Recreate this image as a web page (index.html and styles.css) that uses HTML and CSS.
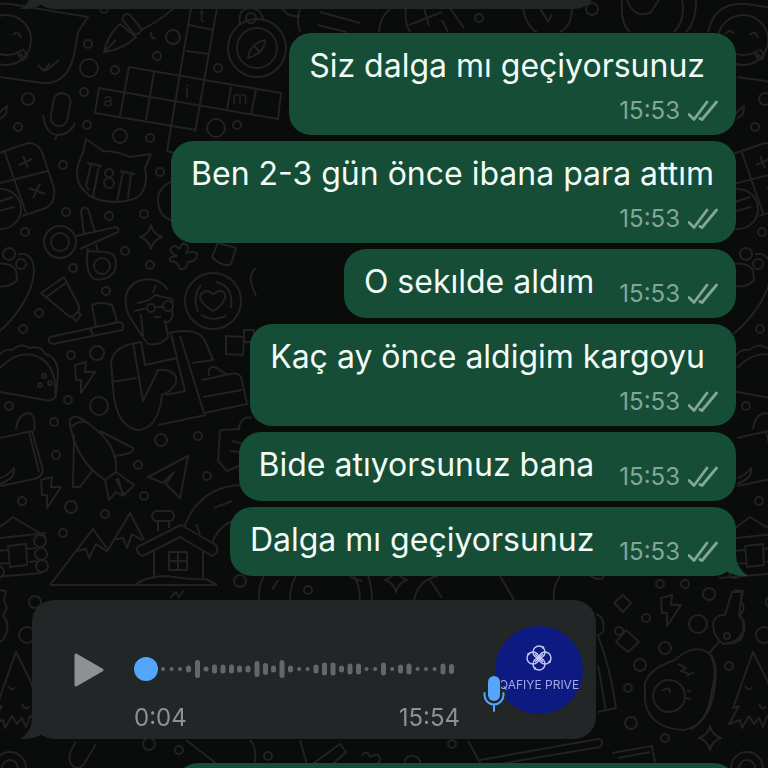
FILE: index.html
```html
<!DOCTYPE html>
<html lang="tr">
<head>
<meta charset="utf-8">
<meta name="viewport" content="width=device-width, initial-scale=1">
<title>Sohbet</title>
<link rel="stylesheet" href="styles.css">
</head>
<body>
<svg class="wallpaper" viewBox="0 0 768 768" preserveAspectRatio="xMinYMin slice" aria-hidden="true">
  <defs>
    <path id="bolt" d="M-7-13 4-16 3-6 13-6-1 15-1 2-6 2Z"/>
    <path id="spark" d="M0-12Q2-3 11 0 2 3 0 12-2 3-11 0-2-3 0-12Z"/>
    <g id="edge">
      <!-- smiling face in a speech bubble -->
      <path d="M-29 32C-24 10-10 2 10 4L88 17 78 32 74 55Q67 85 42 83L0 77M38 65l6 6 6-8M43 69l4 1 12-10"/>
      <circle cx="6" cy="40" r="25"/>
      <path d="M-12 34q5-6 9 0M13 35q5-6 8 3M-10 50Q8 60 22 50M17 52l4 7q5 2 6-4l-4-6M20 53l3 4"/>
      <!-- pencil tip, calculator -->
      <path d="M-6 120 2 110 7 106 6 114 0 119M-10 156 28 143Q38 143 42 152L54 188Q56 202 46 208L22 216M4 150 26 213M-8 185 48 171M19 165l13-6M23 156l5 12M29 188l16 6M40 184l-7 14"/>
      <circle cx="1" cy="209" r="20"/><path d="M-8 204 13 197M-8 213 14 207"/>
      <!-- guitar head -->
      <circle cx="9" cy="254" r="6"/><circle cx="21" cy="264" r="5"/>
      <path d="M18 254Q34 252 34 272C33 295 12 322-4 334M-4 264Q10 262 16 270L17 280Q10 288-3 286"/>
      <!-- taco -->
      <path d="M-4 360Q2 348 12 350 22 342 29 348 42 345 45 354 58 357 58 374L56 395Q54 402 45 400L-5 391M0 368Q24 344 46 362 57 374 55 394"/>
      <circle cx="44" cy="376" r="2"/><circle cx="40" cy="385" r="2"/><circle cx="50" cy="383" r="2"/>
      <!-- book -->
      <path d="M0 438 32 431 43 470Q42 477 34 479L0 486M29 432l10 40M16 429q2-16 14-16 6 4 4 18M0 478q8-2 14-10 2 10-14 16"/>
      <!-- log cabin -->
      <path d="M-18 540 13 517 46 537M-18 540 46 533M-18 578 42 573M8 546l18-2 1 21-17 2ZM-4 551l12-1M27 549l9-1M-4 564l13-1M29 562l8-1"/>
      <circle cx="40" cy="541" r="6"/><circle cx="41" cy="554" r="6"/><circle cx="42" cy="566" r="6"/><circle cx="-2" cy="572" r="6"/>
      <!-- shrub and pine tree -->
      <path d="M-3 590 6 591 4 600 7 608 3 616Q12 625 3 640L-4 644M16 652-4 708 2 706-8 724 3 720 5 728 12 716 17 724 22 718 26 727 30 716 38 720 33 704 38 703 30 680ZM8 686q4 6 7 1M22 704q4 8 7 2"/>
      <circle cx="10" cy="768" r="16"/><circle cx="10" cy="768" r="8"/>
      <circle cx="28" cy="99" r="6"/><circle cx="18" cy="127" r="4"/><circle cx="25" cy="232" r="4"/><circle cx="23" cy="329" r="4"/><circle cx="9" cy="406" r="4"/><circle cx="22" cy="501" r="4"/><circle cx="35" cy="602" r="6"/><circle cx="27" cy="635" r="8"/>
    </g>
  </defs>
  <use href="#edge"/>
  <use href="#edge" x="737"/>
  <!-- microphone -->
  <rect x="52" y="93" width="17" height="33" rx="8" transform="rotate(10 60 110)"/>
  <path d="M43 115q2 18 14 20 13 0 18-12M57 135l-2 5"/>
  <!-- fountain pen -->
  <path d="M104 52Q107 36 120 24L136 37Q122 50 104 52ZM104 52l12-12"/>
  <rect x="120" y="19" width="23" height="9" rx="4" transform="rotate(50 131 24)"/>
  <path d="M141 30Q158 22 174 8M151 32q0 8 5 6"/>
  <!-- crossword -->
  <path d="M191 8 167 151 174 153M217 8 195 132M129 67 281 93 278 119 99 88 95 113 196 130M129 67 120 116M154 72 146 120M231 87 227 110M256 90 251 114M189 25 214 30M186 51 209 54"/>
  <g class="letters"><text x="103" y="106">a</text><text x="185" y="98">i</text><text x="232" y="104">m</text><text x="199" y="22">t</text></g>
  <!-- compass -->
  <circle cx="257" cy="48" r="29"/><circle cx="257" cy="48" r="20"/><circle cx="251" cy="18" r="5"/>
  <path d="M240 25Q237 8 251 8 263 10 263 20M248 58Q250 43 265 40 265 53 248 58ZM254 46l6 6"/>
  <!-- objects between the top cards -->
  <path d="M282 8q6 10 18 8M300 8q-4 12 0 24M320 12l40 11M318 25l28 7M391 8q-12 10-12 24M406 8q-2 14 4 24M409 25l33-13M424 8l5 18M442 20l6 12M450 8l14 20M523 8q4 20 14 24M572 8q0 18-12 24M540 8l8 14 4-8M622 0q-2 24 8 32M627 0q8 20 24 12l8-12M682 0q4 20-8 32M696 0q0 22-10 32"/>
  <!-- cat -->
  <path d="M86 139 103 151Q117 151 130 157L151 154 145 168Q149 190 136 198 112 207 90 196 72 183 79 162L83 152ZM87 163l15 3M91 164l-5 22 3 4M99 166l-6 30M120 171l15 3M123 172l-6 30M131 174l-3 24"/>
  <circle cx="109" cy="173" r="4"/><circle cx="109" cy="183" r="5"/>
  <path d="M172 181q-16 8-14 22 2 14 14 18"/>
  <!-- scissors -->
  <circle cx="60" cy="242" r="16"/><circle cx="60" cy="242" r="9"/><circle cx="102" cy="266" r="8"/>
  <path d="M76 236 116 227Q120 229 118 232L80 249M84 234 81 211Q83 205 88 209L95 232M88 248Q84 272 94 279 108 282 115 270 119 253 105 252L88 251M96 244l2 8"/>
  <use href="#spark" x="151" y="237"/>
  <path d="M170 249q5-6 9 0l4-6q8 2 3 10 5-2 11 0 1 8-9 9-1 8-8 7-2-8-10-8-1-5 7-5-6-2-7-7ZM218 243l18 5-5 16q-8 4-19-7ZM256 268q-8 6-4 18l4 10"/>
  <!-- bottle and hat -->
  <path d="M41 293 64 277 79 306Q80 314 70 317ZM45 298l22-16M72 317l4 4 5-6-4-4M92 305q8-4 20 0l5 16M92 305l4 22M50 337l69-15q7 2 3 8l-69 14q-7-2-3-7ZM90 328l3 7"/>
  <!-- reader with spectacles -->
  <path d="M142 336 128 314Q120 290 138 281 158 275 168 290M141 314 143 336M165 320 168 337Q160 346 148 344L142 336M134 311l14-3M137 303q14-2 18-8l17 4M153 293l3-8M172 299l2 3M172 309q3 12-8 14M154 317l7 0"/>
  <circle cx="151" cy="308" r="4"/><circle cx="168" cy="306" r="5"/>
  <path d="M155 307h8M142 342Q114 345 111 362L114 398Q120 430 140 430 159 426 162 395 178 388 176 377 171 368 158 370L143 401 133 343M141 341l4 24 32-7-6-24M111 382l26-4M168 333Q200 326 206 343L213 360 192 363M180 336l24 77 43-9-6-27Q238 372 230 374L202 380M177 359l8 32-19 4M203 397l39-7M158 425l48-10M209 376q-2-12 8-8 8 6 12 7"/>
  <!-- heart badge -->
  <circle cx="213" cy="301" r="28"/>
  <path d="M198 312q-6-16 3-27M216 282q18 4 15 26M201 315q12 7 25 1M213 311q-16-10-12-17 6-6 12 0 8-6 12 0 2 8-12 17ZM226 336l18 1-1 18-17-1ZM244 330h10v12h-10Z"/>
  <use href="#bolt" x="82" y="378"/>
  <use href="#bolt" x="48" y="493"/>
  <!-- rocket -->
  <path d="M70 420Q74 412 89 424 119 445 116 472L105 480Q77 462 70 425ZM74 434l-1 53 7 0 12-16M100 431l33 17q2 6-20 8M70 428q9-8 16-6M105 480l4 20 7-8 7 4-5-18M116 472l18 13-10 10-8-16"/>
  <!-- paper plane and note -->
  <path d="M148 477 188 456 180 498 166 484 174 472 163 483ZM220 430l20-1M220 430l-2 31 9 10 12-5M238 430q4-16 14-12M232 441l20 5M230 451l18 2"/>
  <!-- mountains and cottage -->
  <path d="M50 585 93 529 108 550 130 513 144 540M50 585H217M77 551l9-2 3 9 7-14 12 8M113 540l10-2 4 10 5-14 10 6M137 547Q136 554 143 556L180 537 212 556Q220 553 216 545L181 525 137 547M154 550v27M203 550v28M169 552h18v18h-18ZM178 552v18M169 561h18M158 531v-10M169 521v7M136 584q12-8 32-8 24 4 38 3l11 6"/>
  <rect x="152" y="511" width="22" height="10" rx="5"/>
  <!-- rainbow -->
  <path d="M184 527Q200 486 242 485M212 543q10-24 32-24M214 508l18-7M196 524l4 10M259 600q-1-14 5-24M290 600q0-14 6-24M272 590l6-10M350 577l12 4M360 600q0-14-6-24M372 600q0-14-4-24M414 600q4-20 24-24M430 580l12 18M500 576l14 24M560 576q-8 12-6 24M590 576q12 6 14 0M170 598l6-6 3 5 5-7"/>
  <use href="#spark" x="396" y="580"/>
  <!-- avocado -->
  <path d="M645 683Q650 668 675 660 694 642 710 654 718 668 712 690 708 726 684 730 648 728 645 700ZM710 654q8 8 5 30-3 34-24 45M678 664l8 4-5 3 8 3M694 672l-7 4"/>
  <circle cx="669" cy="696" r="16"/><path d="M662 691q8-6 8 2M687 690l4 2M686 698l5 1"/>
  <!-- whisk, boxes and lightning -->
  <path d="M732 592h10l-3 24q6 4 4 16-6 12-20 12-10-8-10-20 2-10 12-9ZM720 641l-11 12M623 595l8 8-8 9-9-9ZM626 630l13 12-11 10-12-10Z"/>
  <circle cx="619" cy="631" r="4"/><circle cx="727" cy="636" r="3"/>
  <use href="#bolt" x="668" y="611"/>
  <use href="#spark" x="710" y="738"/>
  <path d="M596 614q10 4 7 18l-6 4M598 636q12 30 18 72l-18 4M598 665l8 46M468 741l14 25M480 760l118-21q8 2 2 8L488 766M612 753l40-7 4 22M618 758l32-6M76 742q-10 14-5 22 6 8 13 0l12-20M186 740l36 28M250 740q8 8 4 28M300 740l8 28M310 766l30-22 6 8-18 16M362 755q6-6 8 2 10-6 10 4l-8 8M404 768q0-14 10-12 8 2 6 12"/>
  <g>
    <circle cx="88" cy="44" r="4"/><circle cx="89" cy="68" r="9"/><circle cx="115" cy="70" r="4"/><circle cx="84" cy="92" r="4"/><circle cx="87" cy="125" r="4"/><circle cx="120" cy="136" r="7"/><circle cx="150" cy="138" r="4"/><circle cx="157" cy="56" r="4"/><circle cx="173" cy="37" r="7"/><circle cx="218" cy="68" r="4"/><circle cx="216" cy="128" r="9"/><circle cx="237" cy="125" r="4"/><circle cx="63" cy="165" r="4"/><circle cx="160" cy="172" r="4"/><circle cx="66" cy="212" r="4"/><circle cx="109" cy="216" r="4"/><circle cx="144" cy="214" r="4"/><circle cx="125" cy="251" r="4"/><circle cx="104" cy="9" r="4"/><circle cx="479" cy="18" r="4"/><circle cx="592" cy="9" r="6"/>
    <circle cx="73" cy="268" r="4"/><circle cx="106" cy="291" r="4"/><circle cx="39" cy="313" r="4"/><circle cx="150" cy="265" r="4"/><circle cx="71" cy="355" r="4"/><circle cx="97" cy="353" r="7"/><circle cx="68" cy="400" r="4"/><circle cx="99" cy="406" r="9"/><circle cx="54" cy="422" r="4"/>
    <circle cx="56" cy="455" r="4"/><circle cx="198" cy="436" r="4"/><circle cx="161" cy="440" r="6"/><circle cx="138" cy="465" r="4"/><circle cx="207" cy="476" r="4"/><circle cx="144" cy="496" r="4"/><circle cx="71" cy="507" r="6"/><circle cx="105" cy="514" r="4"/><circle cx="63" cy="533" r="4"/><circle cx="240" cy="581" r="6"/><circle cx="308" cy="590" r="4"/>
    <circle cx="660" cy="584" r="4"/><circle cx="685" cy="584" r="4"/><circle cx="709" cy="594" r="6"/><circle cx="646" cy="618" r="4"/><circle cx="698" cy="624" r="9"/><circle cx="665" cy="648" r="6"/><circle cx="640" cy="665" r="6"/><circle cx="628" cy="688" r="4"/><circle cx="631" cy="723" r="6"/><circle cx="665" cy="738" r="4"/><circle cx="729" cy="666" r="4"/>
    <circle cx="149" cy="744" r="6"/><circle cx="179" cy="750" r="4"/><circle cx="268" cy="756" r="4"/><circle cx="452" cy="744" r="4"/>
  </g>
</svg>
<svg class="sprite" aria-hidden="true">
  <symbol id="ticks" viewBox="0 0 30 22"><path d="M1 14.500 6 19.500 19 2M12 18.500 14 19.500 28.500 2" fill="none" stroke="currentColor" stroke-width="2.800" stroke-linejoin="round" stroke-linecap="round"/></symbol>
  <symbol id="tail" viewBox="0 0 26 24"><path d="M0 0H14Q13 16 26 24 14 25 4 19L0 20Z" fill="currentColor"/></symbol>
</svg>

<main class="chat">
  <article class="bubble in stub-top"><svg class="tail"><use href="#tail"/></svg></article>

  <section class="thread">
    <article class="bubble out stacked roomy">
      <p class="text">Siz dalga mı geçiyorsunuz</p>
      <footer class="meta"><time>15:53</time><svg class="ticks"><use href="#ticks"/></svg></footer>
    </article>
    <article class="bubble out stacked">
      <p class="text">Ben 2-3 gün önce ibana para attım</p>
      <footer class="meta"><time>15:53</time><svg class="ticks"><use href="#ticks"/></svg></footer>
    </article>
    <article class="bubble out">
      <p class="text">O sekılde aldım</p>
      <footer class="meta"><time>15:53</time><svg class="ticks"><use href="#ticks"/></svg></footer>
    </article>
    <article class="bubble out stacked roomy">
      <p class="text">Kaç ay önce aldigim kargoyu</p>
      <footer class="meta"><time>15:53</time><svg class="ticks"><use href="#ticks"/></svg></footer>
    </article>
    <article class="bubble out">
      <p class="text">Bide atıyorsunuz bana</p>
      <footer class="meta"><time>15:53</time><svg class="ticks"><use href="#ticks"/></svg></footer>
    </article>
    <article class="bubble out">
      <p class="text">Dalga mı geçiyorsunuz</p>
      <footer class="meta"><time>15:53</time><svg class="ticks"><use href="#ticks"/></svg></footer>
      <svg class="tail"><use href="#tail"/></svg>
    </article>
  </section>

  <article class="bubble in voice">
    <button class="play" type="button" aria-label="Oynat">
      <svg viewBox="0 0 30 34"><path d="M2 2 28 17 2 32Z" fill="currentColor" stroke="currentColor" stroke-width="3" stroke-linejoin="round"/></svg>
    </button>
    <div class="player">
      <div class="track">
        <svg class="wave" viewBox="0 0 325 24" aria-hidden="true">
          <path class="dots" d="M28.500 12h.1M37 12h.1M45.500 12h.1M79.900 12h.1M156 12h.1M164.600 12h.1M173 12h.1M190 12h.1M232 12h.1M240.600 12h.1M257.600 12h.1M283 12h.1M291.500 12h.1M300 12h.1"/>
          <path class="bars" d="M54 11v2M63 5.500v13M71.500 12h.1M80 10v4M88.500 10v4M97 10v4M105 11v2M113.500 11v2M122.500 6.500v11M131 8.500v7M139 11v2M147.500 5.500v13M156 11v2M181.500 10v4M190 8v8M198.500 8v8M207 11v2M215.500 9v6M224 9v6M249 8v8M266 10v4M274.500 9v6M308.500 9v6M317 9.500v5"/>
        </svg>
        <input class="seek" type="range" min="0" max="4" value="0" aria-label="Sesli mesaj konumu">
      </div>
      <div class="times"><span>0:04</span><time>15:54</time></div>
    </div>
    <div class="avatar">
      <svg class="logo" viewBox="0 0 28 28" aria-hidden="true"><g fill="none" stroke="currentColor" stroke-width="1.400"><circle cx="14" cy="8" r="6"/><circle cx="14" cy="20" r="6"/><circle cx="8" cy="14" r="6"/><circle cx="20" cy="14" r="6"/><path d="M10 10l8 8M18 10l-8 8"/></g><g fill="currentColor"><circle cx="14" cy="14" r="2"/><circle cx="18" cy="3.500" r="1.200"/><circle cx="24.500" cy="18" r="1.200"/><circle cx="10" cy="24.500" r="1.200"/><circle cx="3.500" cy="10" r="1.200"/></g></svg>
      <span class="brand">QAFIYE PRIVE</span>
      <svg class="mic" viewBox="0 0 26 42" aria-hidden="true"><g fill="none" stroke-linecap="round"><path class="halo" d="M13 9v12M3.500 20v2a9.500 9.500 0 0 0 19 0v-2M13 32v5" stroke-width="6"/><path d="M3.500 20v2a9.500 9.500 0 0 0 19 0v-2M13 32v6" stroke="currentColor" stroke-width="2"/></g><rect class="halo-fill" x="6" y="2" width="14" height="27" rx="7"/><rect x="7" y="3" width="12" height="25" rx="6" fill="currentColor"/></svg>
    </div>
    <svg class="tail"><use href="#tail"/></svg>
  </article>

  <article class="bubble out stub-bottom"></article>
</main>
</body>
</html>
```

FILE: styles.css
```css
* { box-sizing: border-box; }

body {
  margin: 0;
  background: #0a0b0b;
  font-family: Inter, "Liberation Sans", sans-serif;
}

.wallpaper {
  position: fixed;
  inset: 0;
  width: 100%;
  height: 100%;
  fill: none;
  stroke: #222223;
  stroke-width: 2px;
  stroke-linejoin: round;
}

.letters {
  fill: #222223;
  stroke: none;
  font-size: 18px;
}

.sprite { display: none; }

.chat {
  position: relative;
  display: flex;
  flex-direction: column;
  gap: 24px;
  height: 100vh;
  padding: 0 32px;
  overflow: hidden;
}

.thread {
  display: flex;
  flex-direction: column;
  gap: 6px;
}

.bubble {
  position: relative;
  flex: none;
  border-radius: 22px;
}

.out {
  display: flex;
  align-items: flex-end;
  align-self: flex-end;
  gap: 25px;
  min-height: 69px;
  padding: 13px 18px 9px 20px;
  background: #154d37;
  color: #f2fbf6;
}

.in {
  align-self: flex-start;
  width: 100%;
  max-width: 564px;
  background: #232626;
  color: #8e9191;
}

.stacked {
  flex-direction: column;
  gap: 10px;
}

.stacked .text {
  padding-right: 4px;
}

.stacked.roomy .text {
  padding-right: 13px;
}

.text {
  margin: 0;
  align-self: flex-start;
  font-size: 32px;
  line-height: 40px;
}

.meta {
  display: flex;
  align-items: center;
  gap: 8px;
  color: #84a698;
  font-size: 24px;
  line-height: 30px;
}

.ticks {
  width: 30px;
  height: 22px;
}

.tail {
  position: absolute;
  bottom: 0;
  width: 26px;
  height: 24px;
}

.out .tail {
  right: -12px;
  color: #154d37;
}

.in .tail {
  left: -12px;
  color: #232626;
  transform: scaleX(-1);
}

.stub-top {
  height: 69px;
  margin-top: -60px;
}

.stub-bottom {
  width: 100%;
  max-width: 560px;
}

.voice {
  display: flex;
  align-items: center;
  padding: 0 13px 0 42px;
}

.play {
  flex: none;
  width: 30px;
  height: 34px;
  padding: 0;
  border: 0;
  background: none;
  color: #8e9191;
}

.play svg,
.wave {
  display: block;
  width: 100%;
  height: 100%;
}

.player {
  flex: 1;
  padding: 57px 35px 6px 30px;
}

.track {
  display: grid;
  height: 24px;
}

.wave,
.seek {
  grid-area: 1 / 1;
}

.wave {
  fill: none;
  stroke: #646767;
  stroke-linecap: round;
}

.dots { stroke-width: 4px; }
.bars { stroke-width: 5px; }

.seek {
  appearance: none;
  width: 100%;
  height: 24px;
  margin: 0;
  background: transparent;
}

.seek::-webkit-slider-thumb {
  appearance: none;
  width: 24px;
  height: 24px;
  border: 0;
  border-radius: 50%;
  background: #53a6fb;
}

.times {
  display: flex;
  justify-content: space-between;
  margin-top: 22px;
  font-size: 24px;
  line-height: 30px;
}

.avatar {
  position: relative;
  display: flex;
  flex: none;
  flex-direction: column;
  align-items: center;
  width: 88px;
  height: 88px;
  padding-top: 18px;
  border-radius: 50%;
  background: #0d1a82;
  color: #c3c9f3;
}

.logo {
  width: 28px;
  height: 28px;
}

.brand {
  margin-top: 5px;
  color: #a3abe3;
  font-size: 12px;
  line-height: 16px;
  white-space: nowrap;
}

.mic {
  position: absolute;
  left: -14px;
  bottom: -1px;
  width: 26px;
  height: 42px;
  color: #53a6fb;
}

.halo { stroke: #232626; }
.halo-fill { fill: #232626; }
```
